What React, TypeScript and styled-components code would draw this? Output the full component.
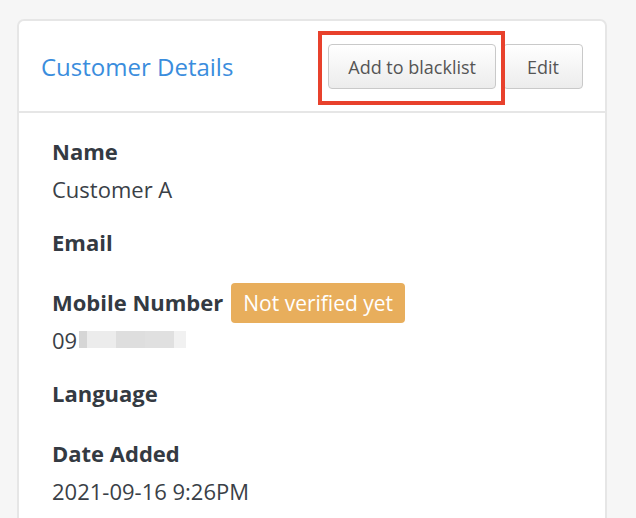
import React from "react";
import styled, { createGlobalStyle } from "styled-components";

const GlobalStyle = createGlobalStyle`
  html, body {
    margin: 0;
    padding: 0;
    background: #f6f6f6;
    font-family: "Open Sans", "Liberation Sans", sans-serif;
    -webkit-font-smoothing: antialiased;
  }
`;

const Page = styled.div`
  padding: 19px 0 0 17px;
  height: 518px;
  box-sizing: border-box;
  overflow: hidden;
`;

const Card = styled.div`
  width: 590px;
  background: #fff;
  border: 2px solid #e6e6e6;
  border-radius: 7px;
  box-sizing: border-box;
`;

const Header = styled.div`
  display: flex;
  align-items: center;
  justify-content: space-between;
  height: 92px;
  padding: 1px 22px 0 22px;
  border-bottom: 2px solid #e6e6e6;
  box-sizing: border-box;
`;

const Title = styled.h2`
  margin: 0;
  font-size: 24px;
  font-weight: 400;
  color: #3a8ddd;
`;

const Actions = styled.div`
  display: flex;
  gap: 7px;
`;

const Highlight = styled.div`
  position: relative;
  display: flex;

  &::after {
    content: "";
    position: absolute;
    left: -10px;
    right: -9px;
    top: -13px;
    bottom: -16px;
    border: 4.5px solid #e8412c;
    pointer-events: none;
  }
`;

const Button = styled.button`
  height: 45px;
  min-width: 80px;
  padding: 0 19px;
  font-family: inherit;
  font-size: 18px;
  color: #555;
  background: linear-gradient(#ffffff, #ececec);
  border: 1.5px solid #c9c9c9;
  border-radius: 4px;
  cursor: pointer;
`;

const Body = styled.div`
  padding: 23px 33px 0;
`;

const Field = styled.div`
  margin-bottom: 22px;
`;

const Label = styled.div`
  display: flex;
  align-items: center;
  font-size: 22px;
  line-height: 31px;
  font-weight: 700;
  color: #343a42;
  margin-bottom: 7px;
`;

const Value = styled.div`
  display: flex;
  align-items: center;
  font-size: 22px;
  line-height: 31px;
  color: #3a3f47;
  &:empty {
    height: 0;
  }
`;

const Badge = styled.span`
  margin: -4.5px 0 -4.5px 8px;
  padding: 0 12px;
  height: 40px;
  line-height: 40px;
  border-radius: 4px;
  background: #e8ae5c;
  color: #fff;
  font-size: 21px;
  font-weight: 400;
`;

const Redacted = styled.span`
  display: inline-block;
  width: 107px;
  height: 17px;
  margin: -2px 0 0 2px;
  background: linear-gradient(
    to right,
    #d6d6d6 0 8px,
    #ececec 8px 37px,
    #dedede 37px 66px,
    #e0e0e0 66px 95px,
    #f1f1f1 95px 107px
  );
`;

const fields: { label: string; value?: React.ReactNode; badge?: string }[] = [
  { label: "Name", value: "Customer A" },
  { label: "Email" },
  {
    label: "Mobile Number",
    badge: "Not verified yet",
    value: (
      <>
        09
        <Redacted />
      </>
    ),
  },
  { label: "Language" },
  { label: "Date Added", value: "2021-09-16 9:26PM" },
];

export default function App() {
  return (
    <Page>
      <GlobalStyle />
      <Card>
        <Header>
          <Title>Customer Details</Title>
          <Actions>
            <Highlight>
              <Button>Add to blacklist</Button>
            </Highlight>
            <Button>Edit</Button>
          </Actions>
        </Header>
        <Body>
          {fields.map((f) => (
            <Field key={f.label}>
              <Label>
                {f.label}
                {f.badge && <Badge>{f.badge}</Badge>}
              </Label>
              <Value>{f.value}</Value>
            </Field>
          ))}
        </Body>
      </Card>
    </Page>
  );
}
